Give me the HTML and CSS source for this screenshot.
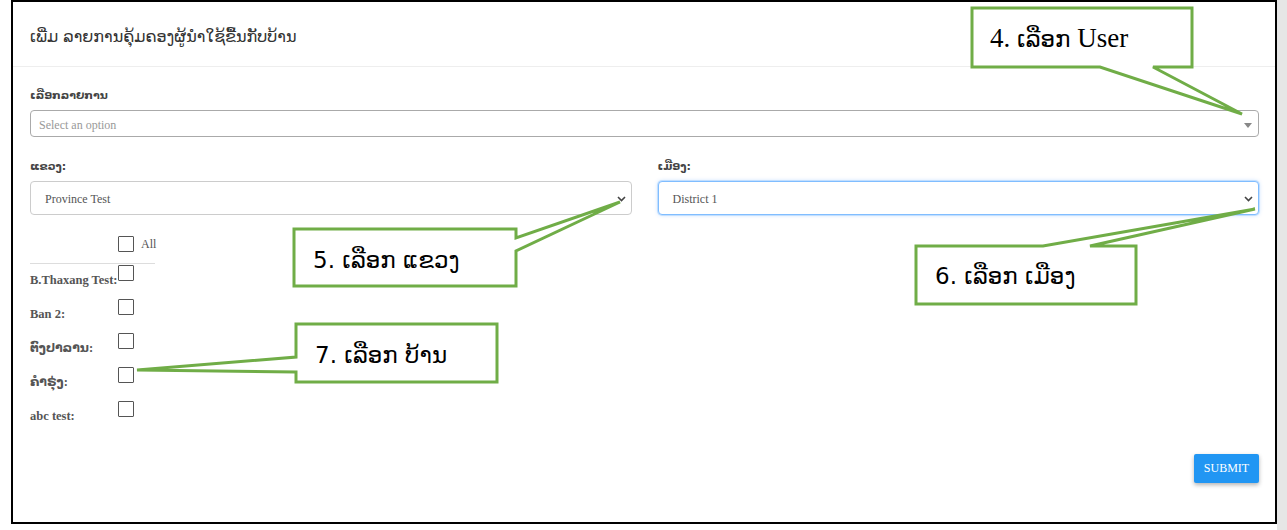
FILE: index.html
```html
<!DOCTYPE html>
<html>
<head>
<meta charset="utf-8">
<link rel="stylesheet" href="styles.css">
</head>
<body>
<div class="frame">
  <div class="card-header"><h1 class="title">ເພີ່ມ ລາຍການຄຸ້ມຄອງຜູ້ນຳໃຊ້ຂື້ນກັບບ້ານ</h1></div>
  <div class="card-body">
    <div class="field">
      <label class="lbl">ເລືອກລາຍການ</label>
      <div class="sel sel2"><span class="ph">Select an option</span><span class="tri"></span></div>
    </div>
    <div class="row2">
      <div class="field">
        <label class="lbl">ແຂວງ:</label>
        <div class="sel sel-lg"><span class="val">Province Test</span>
          <svg class="chev" width="9" height="6" viewBox="0 0 9 6"><path d="M1 1 L4.5 4.5 L8 1" fill="none" stroke="#444" stroke-width="1.6"/></svg></div>
      </div>
      <div class="field">
        <label class="lbl">ເມືອງ:</label>
        <div class="sel sel-lg focus"><span class="val">District 1</span>
          <svg class="chev" width="9" height="6" viewBox="0 0 9 6"><path d="M1 1 L4.5 4.5 L8 1" fill="none" stroke="#444" stroke-width="1.6"/></svg></div>
      </div>
    </div>
    <div class="villages">
      <div class="vrow vhead"><span class="vname"></span><span class="cb"></span><span class="all">All</span></div>
      <div class="vrow"><span class="vname">B.Thaxang Test:</span><span class="cb"></span></div>
      <div class="vrow"><span class="vname">Ban 2:</span><span class="cb"></span></div>
      <div class="vrow"><span class="vname">ຕົງປາລານ:</span><span class="cb"></span></div>
      <div class="vrow"><span class="vname">ຄຳຣຸ່ງ:</span><span class="cb"></span></div>
      <div class="vrow"><span class="vname">abc test:</span><span class="cb"></span></div>
    </div>
    <div class="actions"><button class="submit">SUBMIT</button></div>
  </div>
</div>
<svg class="callouts" width="1287" height="530" viewBox="0 0 1287 530">
  <g fill="#fff" stroke="#70ad47" stroke-width="3" stroke-linejoin="miter">
    <path d="M972 8 H1192 V67 H1153 L1242 114 L1100 67 H972 Z"/>
    <path d="M294 229 H516 V238 L620 202 L516 251 V286 H294 Z"/>
    <path d="M916 246 H1043 L1255 209 L1090 246 H1136 V304 H916 Z"/>
    <path d="M296 324 H497 V382 H296 V372 L137 370 L296 357 Z"/>
  </g>
  <g fill="#000">
    <text class="ct" x="990" y="47"><tspan class="serif">4. </tspan><tspan class="lao">ເລືອກ</tspan><tspan class="serif"> User</tspan></text>
    <text class="ct lao" x="313" y="268">5. ເລືອກ ແຂວງ</text>
    <text class="ct lao" x="935" y="284">6. ເລືອກ ເມືອງ</text>
    <text class="ct lao" x="315" y="363">7. ເລືອກ ບ້ານ</text>
  </g>
</svg>
</body>
</html>
```
FILE: styles.css
```css
html { background: linear-gradient(to right, #fff 1277px, #e6e6e6 1277px); }
body { margin: 0; position: relative; width: 1287px; height: 530px; overflow: hidden; font-family: "Liberation Serif", "DejaVu Sans", serif; }
.frame { margin-left: 11px; width: 1266px; height: 524px; box-sizing: border-box; border: 2px solid #000; background: #fff; }
.card-header { height: 64px; border-bottom: 1px solid #eee; display: flex; align-items: center; padding-left: 17px; }
.title { margin: 0; font-family: "DejaVu Sans", sans-serif; font-weight: normal; font-size: 16px; color: #333; padding-top: 4px; }
.card-body { padding: 20px 16px 0 17px; }
.field { display: flex; flex-direction: column; }
.lbl { font-family: "DejaVu Sans", sans-serif; font-weight: bold; font-size: 11px; line-height: 18px; color: #444; margin-bottom: 5px; }
.sel { position: relative; box-sizing: border-box; border: 1px solid #ccc; border-radius: 4px; display: flex; align-items: center; background: #fff; }
.sel2 { height: 27px; border-color: #aaa; padding-left: 8px; padding-top: 3px; }
.ph { font-size: 12px; color: #999; }
.tri { position: absolute; right: 6px; top: 12px; width: 0; height: 0; border-left: 4px solid transparent; border-right: 4px solid transparent; border-top: 5px solid #888; }
.row2 { display: grid; grid-template-columns: 1fr 1fr; column-gap: 26px; margin-top: 21px; }
.row2 .lbl { margin-bottom: 5px; }
.sel-lg { height: 34px; padding-left: 14px; padding-top: 2px; }
.val { font-size: 12px; color: #555; }
.chev { position: absolute; right: 5px; top: 14px; }
.focus { border-color: #80bdff; box-shadow: 0 0 0 1px rgba(128,189,255,.35), 0 0 4px rgba(0,123,255,.25); }
.villages { width: 125px; margin-top: 14px; }
.vrow { display: flex; align-items: flex-start; height: 34px; }
.vhead { border-bottom: 1px solid #ddd; box-sizing: border-box; height: 35px; }
.vhead .cb { margin-top: 7px; }
.vname { width: 88px; flex: none; font-weight: bold; font-size: 12.5px; color: #555; line-height: 14px; margin-top: 9px; white-space: nowrap; }
.cb { width: 16px; height: 16px; box-sizing: border-box; border: 1.5px solid #555; border-radius: 1px; margin-top: 1px; flex: none; }
.all { font-size: 12px; color: #555; margin-left: 7px; margin-top: 8px; line-height: 14px; }
.actions { display: flex; justify-content: flex-end; margin-top: 20px; }
.submit { width: 65px; height: 29px; border: none; border-radius: 2px; background: #2196f3; color: #fff; font-family: "Liberation Serif", serif; font-size: 12px; box-shadow: 0 2px 4px rgba(0,0,0,.3); padding: 0; }
.callouts { position: absolute; left: 0; top: 0; }
.ct { font-size: 23px; }
.lao { font-family: "DejaVu Sans", sans-serif; font-weight: normal; }
.serif { font-family: "Liberation Serif", serif; font-size: 27px; }
```
